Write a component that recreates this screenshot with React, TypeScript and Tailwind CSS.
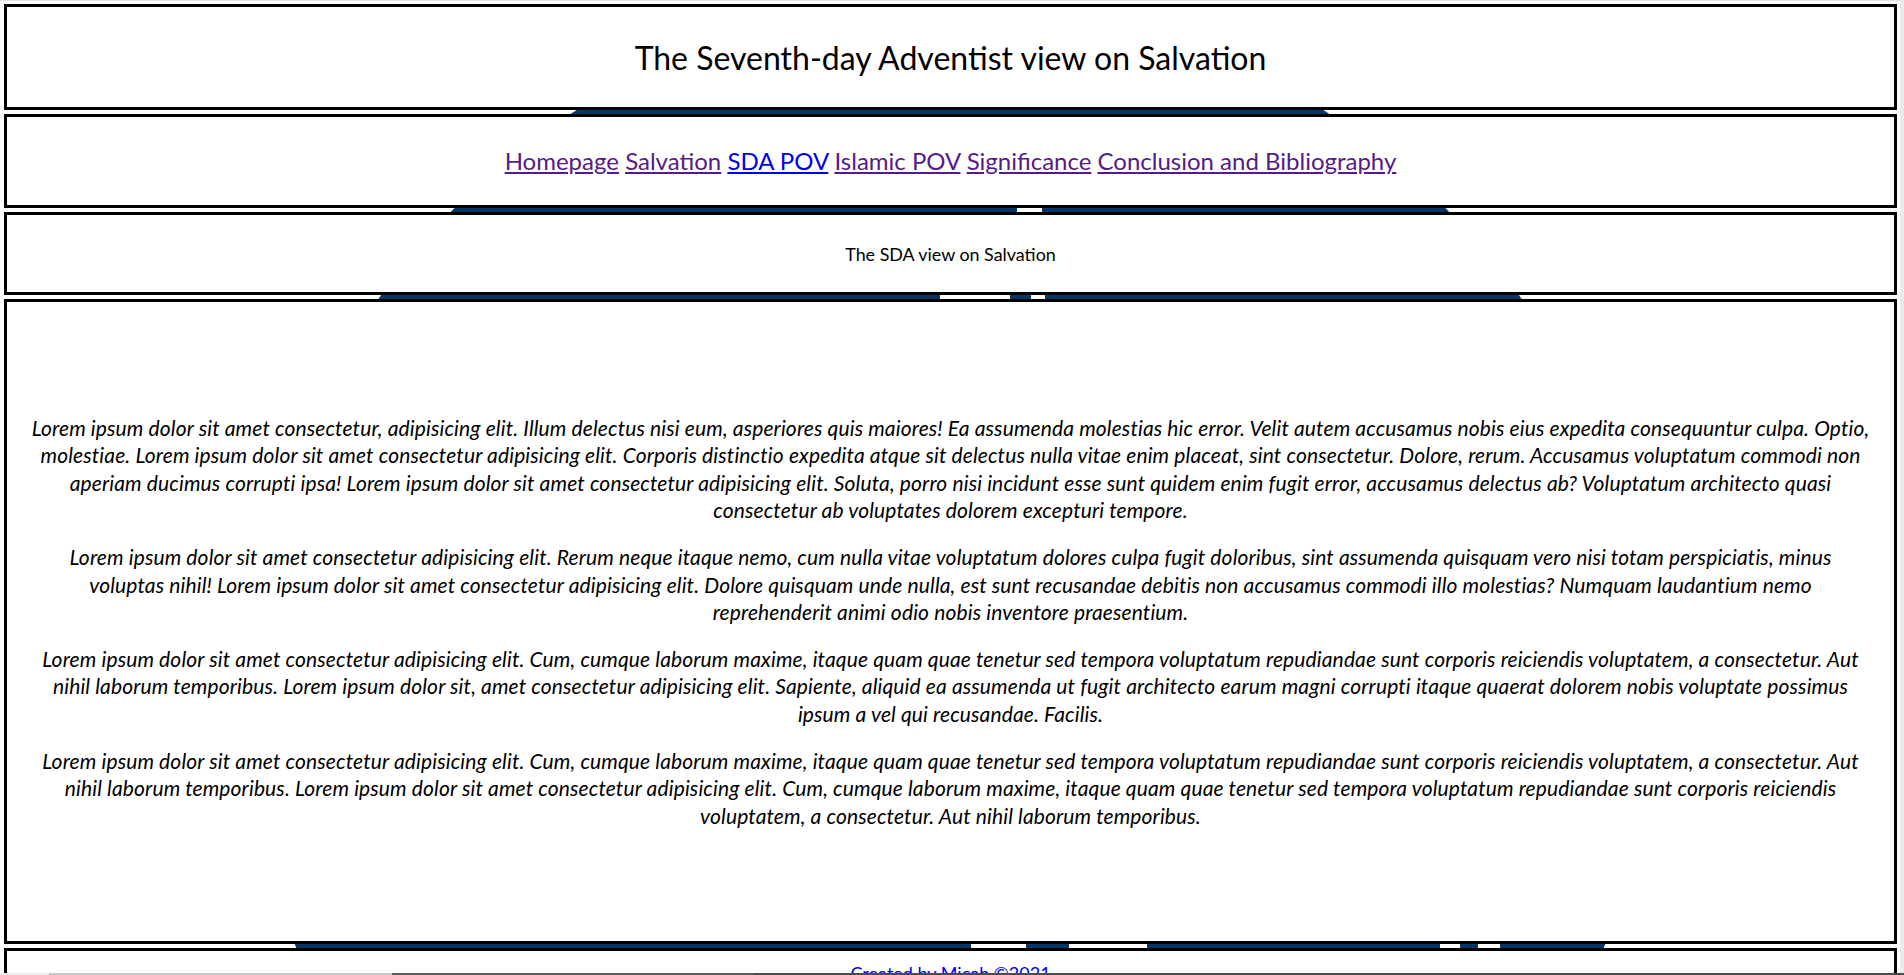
import React from "react";

const paragraphs: string[][] = [
  [
    "Lorem ipsum dolor sit amet consectetur, adipisicing elit. Illum delectus nisi eum, asperiores quis maiores! Ea assumenda molestias hic error. Velit autem accusamus nobis eius expedita consequuntur culpa. Optio,",
    "molestiae. Lorem ipsum dolor sit amet consectetur adipisicing elit. Corporis distinctio expedita atque sit delectus nulla vitae enim placeat, sint consectetur. Dolore, rerum. Accusamus voluptatum commodi non",
    "aperiam ducimus corrupti ipsa! Lorem ipsum dolor sit amet consectetur adipisicing elit. Soluta, porro nisi incidunt esse sunt quidem enim fugit error, accusamus delectus ab? Voluptatum architecto quasi",
    "consectetur ab voluptates dolorem excepturi tempore.",
  ],
  [
    "Lorem ipsum dolor sit amet consectetur adipisicing elit. Rerum neque itaque nemo, cum nulla vitae voluptatum dolores culpa fugit doloribus, sint assumenda quisquam vero nisi totam perspiciatis, minus",
    "voluptas nihil! Lorem ipsum dolor sit amet consectetur adipisicing elit. Dolore quisquam unde nulla, est sunt recusandae debitis non accusamus commodi illo molestias? Numquam laudantium nemo",
    "reprehenderit animi odio nobis inventore praesentium.",
  ],
  [
    "Lorem ipsum dolor sit amet consectetur adipisicing elit. Cum, cumque laborum maxime, itaque quam quae tenetur sed tempora voluptatum repudiandae sunt corporis reiciendis voluptatem, a consectetur. Aut",
    "nihil laborum temporibus. Lorem ipsum dolor sit, amet consectetur adipisicing elit. Sapiente, aliquid ea assumenda ut fugit architecto earum magni corrupti itaque quaerat dolorem nobis voluptate possimus",
    "ipsum a vel qui recusandae. Facilis.",
  ],
  [
    "Lorem ipsum dolor sit amet consectetur adipisicing elit. Cum, cumque laborum maxime, itaque quam quae tenetur sed tempora voluptatum repudiandae sunt corporis reiciendis voluptatem, a consectetur. Aut",
    "nihil laborum temporibus. Lorem ipsum dolor sit amet consectetur adipisicing elit. Cum, cumque laborum maxime, itaque quam quae tenetur sed tempora voluptatum repudiandae sunt corporis reiciendis",
    "voluptatem, a consectetur. Aut nihil laborum temporibus.",
  ],
];

function Backdrop() {
  return (
    <svg
      className="absolute left-0 top-0 pointer-events-none"
      width="1904"
      height="1410"
      viewBox="0 0 1904 1410"
    >
      <circle cx="950" cy="701" r="699" fill="#073664" />
      <rect x="0" y="0" width="1904" height="4" fill="#ffffff" />
      <rect x="1017" y="204" width="25" height="12" fill="#ffffff" />
      <rect x="940" y="291" width="70" height="12" fill="#ffffff" />
      <rect x="1031" y="291" width="14" height="12" fill="#ffffff" />
      <rect x="971" y="940" width="55" height="12" fill="#ffffff" />
      <rect x="1069" y="940" width="78" height="12" fill="#ffffff" />
      <rect x="1440" y="940" width="20" height="12" fill="#ffffff" />
      <rect x="1478" y="940" width="22" height="12" fill="#ffffff" />
    </svg>
  );
}

export default function App() {
  return (
    <div className="relative min-h-screen w-[1904px] bg-white font-['Lato',sans-serif] text-black">
      <Backdrop />
      <div className="relative h-px bg-[#e4e4e4]" />
      <div className="relative flex flex-col gap-1 pl-1 pr-[7px] pt-[3px] pb-10">
        <div className="flex h-[106px] items-center justify-center border-[3px] border-black bg-white">
          <h1 className="text-[32px] leading-[37px]">The Seventh-day Adventist view on Salvation</h1>
        </div>
        <div className="flex h-[94px] items-center justify-center border-[3px] border-black bg-white">
          <nav className="text-[24px] leading-[28px]">
            <a href="#" className="text-[#551a8b] underline">Homepage</a>{" "}
            <a href="#" className="text-[#551a8b] underline">Salvation</a>{" "}
            <a href="#" className="text-[#0000ee] underline">SDA POV</a>{" "}
            <a href="#" className="text-[#551a8b] underline">Islamic POV</a>{" "}
            <a href="#" className="text-[#551a8b] underline">Significance</a>{" "}
            <a href="#" className="text-[#551a8b] underline">Conclusion and Bibliography</a>
          </nav>
        </div>
        <div className="flex h-[83px] items-center justify-center border-[3px] border-black bg-white">
          <h3 className="text-[17.9px] leading-[22px]">The SDA view on Salvation</h3>
        </div>
        <div className="flex h-[645px] flex-col items-center justify-center gap-5 border-[3px] border-black bg-white px-2">
          {paragraphs.map((lines, i) => (
            <p key={i} className="text-center text-[21px] italic leading-[27.3px] tracking-[0.13px]">
              {lines.map((l, j) => (
                <React.Fragment key={j}>
                  <span className="whitespace-nowrap">{l}</span>
                  {j < lines.length - 1 && <br />}
                </React.Fragment>
              ))}
            </p>
          ))}
        </div>
        <div className="flex h-[80px] justify-center border-[3px] border-black bg-white pt-[11px]">
          <a href="#" className="text-[18px] leading-[22px] text-[#0000ee] underline">Created by Micah ©2021</a>
        </div>
      </div>
      <div className="fixed right-0 top-0 h-screen w-[4px] bg-[#ebebeb]" />
      <div className="fixed bottom-0 left-0 flex h-[2px] w-full">
        <div className="w-[49px] bg-[#eeeeee]" />
        <div className="w-[343px] bg-[#c9c9c9]" />
        <div className="w-[361px] bg-[#5a5a5a]" />
        <div className="flex-1 bg-[#4b4b4b]" />
      </div>
    </div>
  );
}
